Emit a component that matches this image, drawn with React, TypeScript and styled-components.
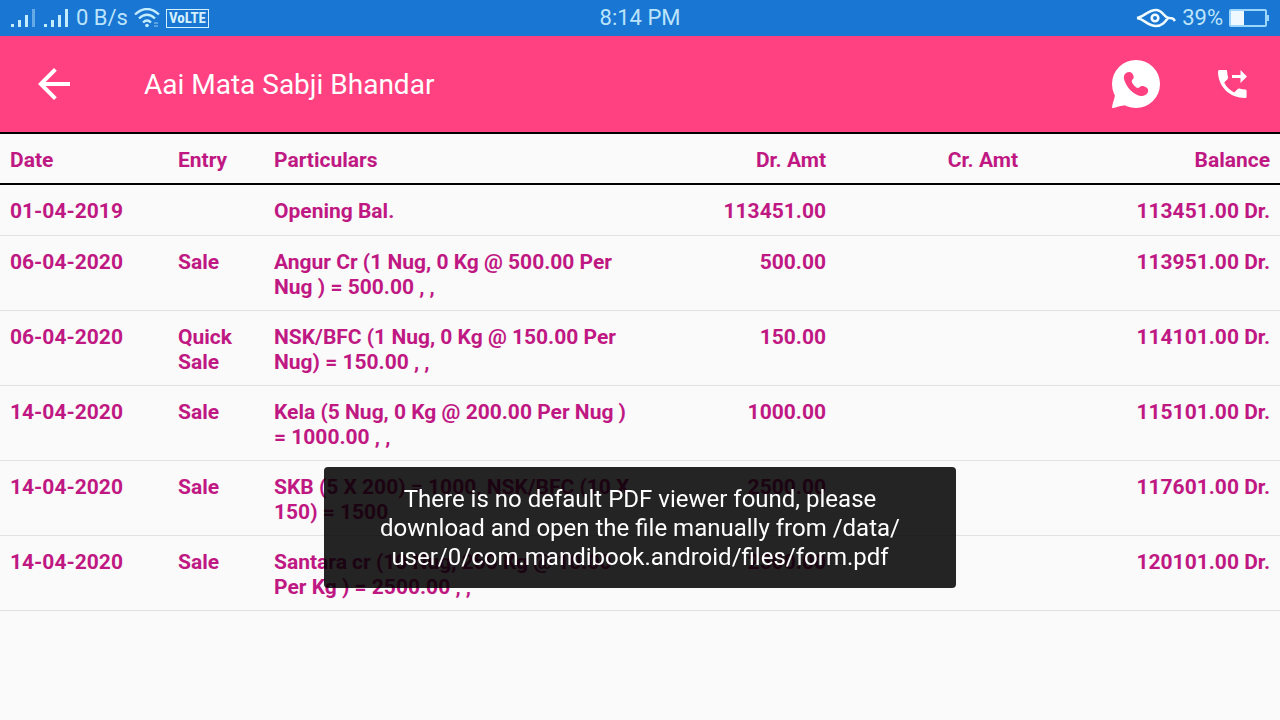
import React from "react";
import styled, { createGlobalStyle } from "styled-components";

const GlobalStyle = createGlobalStyle`
  * { box-sizing: border-box; }
  body {
    margin: 0;
    background: #fafafa;
    font-family: Roboto, "Liberation Sans", sans-serif;
  }
`;

const StatusBar = styled.header`
  display: grid;
  grid-template-columns: 1fr auto 1fr;
  align-items: center;
  height: 36px;
  padding: 0 10px;
  background: #1976d2;
  color: #bbe4fb;
  font-size: 22px;
  line-height: 36px;
`;

const StatusGroup = styled.div<{ $end?: boolean }>`
  display: flex;
  align-items: center;
  justify-content: ${(p) => (p.$end ? "flex-end" : "flex-start")};
  gap: 6px;
`;

const VolteBadge = styled.span`
  padding: 0 2px;
  border: 1px solid #d5f0fd;
  color: #d5f0fd;
  font: 700 15px/17px "Liberation Sans Narrow", "Roboto Condensed", Roboto, sans-serif;
`;

const AppBar = styled.div`
  display: flex;
  align-items: center;
  height: 96px;
  padding: 0 24px 0 30px;
  background: #ff4081;
  color: #fff;
`;

const Title = styled.h1`
  flex: 1;
  margin: 0 0 0 66px;
  padding-top: 2px;
  font-size: 28px;
  font-weight: 400;
  line-height: 36px;
`;

const IconButton = styled.button`
  display: block;
  padding: 0;
  border: 0;
  background: none;
  color: inherit;
  svg { display: block; }
`;

const Actions = styled.div`
  display: flex;
  gap: 48px;
`;

const Ledger = styled.table`
  width: 100%;
  table-layout: fixed;
  border-collapse: separate;
  border-spacing: 0;
  color: #c01883;
  font-size: 21px;
  font-weight: 700;
  line-height: 25px;
`;

const Col = styled.col<{ $width?: string }>`
  width: ${(p) => p.$width ?? "auto"};
`;

type Align = { $num?: boolean; $last?: boolean };

const HeadCell = styled.th<Align>`
  height: 53px;
  padding: 3px ${(p) => (p.$num && !p.$last ? 14 : 10)}px 0 10px;
  border: solid #000;
  border-width: 2px 0;
  text-align: ${(p) => (p.$num ? "right" : "left")};
`;

const Cell = styled.td<Align>`
  height: 51px;
  padding: 14px ${(p) => (p.$num && !p.$last ? 14 : 10)}px 10px 10px;
  border-bottom: 1px solid #e2e2e2;
  vertical-align: top;
  text-align: ${(p) => (p.$num ? "right" : "left")};
`;

const Toast = styled.div`
  position: fixed;
  bottom: 132px;
  left: 50%;
  transform: translateX(-50%);
  width: 632px;
  max-width: 90%;
  padding: 18px 48px 16px;
  border-radius: 4px;
  background: rgba(0, 0, 0, 0.86);
  color: #fff;
  font-size: 24px;
  line-height: 29px;
  text-align: center;
`;

const entries = [
  { date: "01-04-2019", entry: "", text: "Opening Bal.", dr: "113451.00", balance: "113451.00 Dr." },
  { date: "06-04-2020", entry: "Sale", text: "Angur Cr (1 Nug, 0 Kg @ 500.00 Per Nug ) = 500.00 , ,", dr: "500.00", balance: "113951.00 Dr." },
  { date: "06-04-2020", entry: "Quick Sale", text: "NSK/BFC (1 Nug, 0 Kg @ 150.00 Per Nug) = 150.00 , ,", dr: "150.00", balance: "114101.00 Dr." },
  { date: "14-04-2020", entry: "Sale", text: "Kela (5 Nug, 0 Kg @ 200.00 Per Nug ) = 1000.00 , ,", dr: "1000.00", balance: "115101.00 Dr." },
  { date: "14-04-2020", entry: "Sale", text: "SKB (5 X 200) = 1000, NSK/BFC (10 X 150) = 1500", dr: "2500.00", balance: "117601.00 Dr." },
  { date: "14-04-2020", entry: "Sale", text: "Santara cr (10 Nug, 250 Kg @ 10.00 Per Kg ) = 2500.00 , ,", dr: "2500.00", balance: "120101.00 Dr." },
];

const Signal = ({ weak }: { weak?: boolean }) => (
  <svg width="27" height="20" viewBox="0 0 27 20" fill="#c4ecff" aria-hidden="true">
    <rect x="1" y="16" width="3" height="3" />
    <rect x="8" y="12" width="3" height="7" />
    <rect x="15" y="7" width="3" height="12" />
    <rect x="22" y="1" width="3" height="18" opacity={weak ? 0.45 : 1} />
  </svg>
);

const Wifi = () => (
  <svg width="26" height="20" viewBox="0 0 26 20" fill="none" stroke="#c4ecff" strokeWidth="2.300" aria-hidden="true">
    <path d="M1 6.500Q13-4.500 25 6.500M5 10.500Q13 3 21 10.500M9 14.500Q13 10.500 17 14.500" />
    <circle cx="13" cy="17.500" r="1.800" fill="#c4ecff" stroke="none" />
    <path d="M20 15h4M20 18h4" strokeWidth="1.500" opacity=".5" />
  </svg>
);

const Eye = () => (
  <svg width="40" height="20" viewBox="0 0 40 20" fill="none" stroke="#f0faff" strokeWidth="2.600" aria-hidden="true">
    <path d="M1 10C8 9 12 2 20 2c7 0 8 8 13 8 3 0 4 0 6 3M1 10c7 1 11 8 19 8 6 0 9-4 12-8" />
    <circle cx="19" cy="10" r="3.300" />
  </svg>
);

const Battery = () => (
  <svg width="41" height="20" viewBox="0 0 41 20" aria-hidden="true">
    <rect x="1" y="2" width="36" height="16" rx="1" fill="none" stroke="#9dd6fb" strokeWidth="2" />
    <rect x="2" y="3" width="13" height="14" fill="#eff8fe" />
    <rect x="38" y="7" width="2" height="6" fill="#9dd6fb" />
  </svg>
);

export default function App() {
  return (
    <>
      <GlobalStyle />
      <StatusBar>
        <StatusGroup>
          <Signal weak />
          <Signal />
          <span>0 B/s</span>
          <Wifi />
          <VolteBadge>VoLTE</VolteBadge>
        </StatusGroup>
        <span>8:14 PM</span>
        <StatusGroup $end>
          <Eye />
          <span>39%</span>
          <Battery />
        </StatusGroup>
      </StatusBar>
      <AppBar>
        <IconButton aria-label="Back">
          <svg width="48" height="48" viewBox="0 0 24 24" fill="currentColor">
            <path d="M20 11H7.830l5.590-5.590L12 4l-8 8 8 8 1.410-1.410L7.830 13H20v-2z" />
          </svg>
        </IconButton>
        <Title>Aai Mata Sabji Bhandar</Title>
        <Actions>
          <IconButton aria-label="WhatsApp">
            <svg width="48" height="48" viewBox="0 0 48 48">
              <circle cx="24" cy="24" r="24" fill="#fff" />
              <path fill="#fff" d="M3 34c0 5-3 9-3 14 4 0 8-3 13-2.500z" />
              <path fill="#ff4081" d="M14 13c-2 1.500-2.500 4-2 6 2 8 9 15.500 16.500 17 3 .5 6-1 7.300-3.500.7-2 .4-4-1.300-5-1.500-1-3.500-1.800-5-1.500-1.700.4-2.200 2-3.800 2-2.500-.6-5.200-4-6-6.500-.3-1.700 1.800-2.300 2-4 .2-1.500-.8-3.500-2.200-4.800-1.500-1.200-3.700-.8-5.500.3z" />
            </svg>
          </IconButton>
          <IconButton aria-label="Call">
            <svg width="48" height="48" viewBox="0 0 48 48" fill="currentColor">
              <path d="M11.600 10h6.200c.9 0 1.400.7 1.400 1.600 0 2 .3 3.900.9 5.700.2.600 0 1.200-.4 1.600l-3.500 3.500c2.300 4.500 5.500 7.700 10 10l3.500-3.500c.4-.4 1.100-.6 1.600-.4 1.800.6 3.700.9 5.700.9.900 0 1.600.5 1.600 1.400V36.500c0 .9-.7 1.600-1.600 1.600C21.800 38.100 10 26.800 10 11.600c0-.9.700-1.600 1.600-1.600z" />
              <path d="M24 15h8.500v-5l6.500 6.500-6.500 6.500v-5H24z" />
            </svg>
          </IconButton>
        </Actions>
      </AppBar>
      <main>
        <Ledger>
          <colgroup>
            <Col $width="13.125%" />
            <Col $width="7.5%" />
            <Col $width="30%" />
            <Col $width="15%" />
            <Col $width="15%" />
            <Col />
          </colgroup>
          <thead>
            <tr>
              <HeadCell>Date</HeadCell>
              <HeadCell>Entry</HeadCell>
              <HeadCell>Particulars</HeadCell>
              <HeadCell $num>Dr. Amt</HeadCell>
              <HeadCell $num>Cr. Amt</HeadCell>
              <HeadCell $num $last>Balance</HeadCell>
            </tr>
          </thead>
          <tbody>
            {entries.map((row) => (
              <tr key={row.balance}>
                <Cell>{row.date}</Cell>
                <Cell>{row.entry}</Cell>
                <Cell>{row.text}</Cell>
                <Cell $num>{row.dr}</Cell>
                <Cell $num />
                <Cell $num $last>{row.balance}</Cell>
              </tr>
            ))}
          </tbody>
        </Ledger>
      </main>
      <Toast role="status">
        There is no default PDF viewer found, please download and open the file manually from /data/
        <wbr />
        user/0/com.mandibook.android/files/form.pdf
      </Toast>
    </>
  );
}
